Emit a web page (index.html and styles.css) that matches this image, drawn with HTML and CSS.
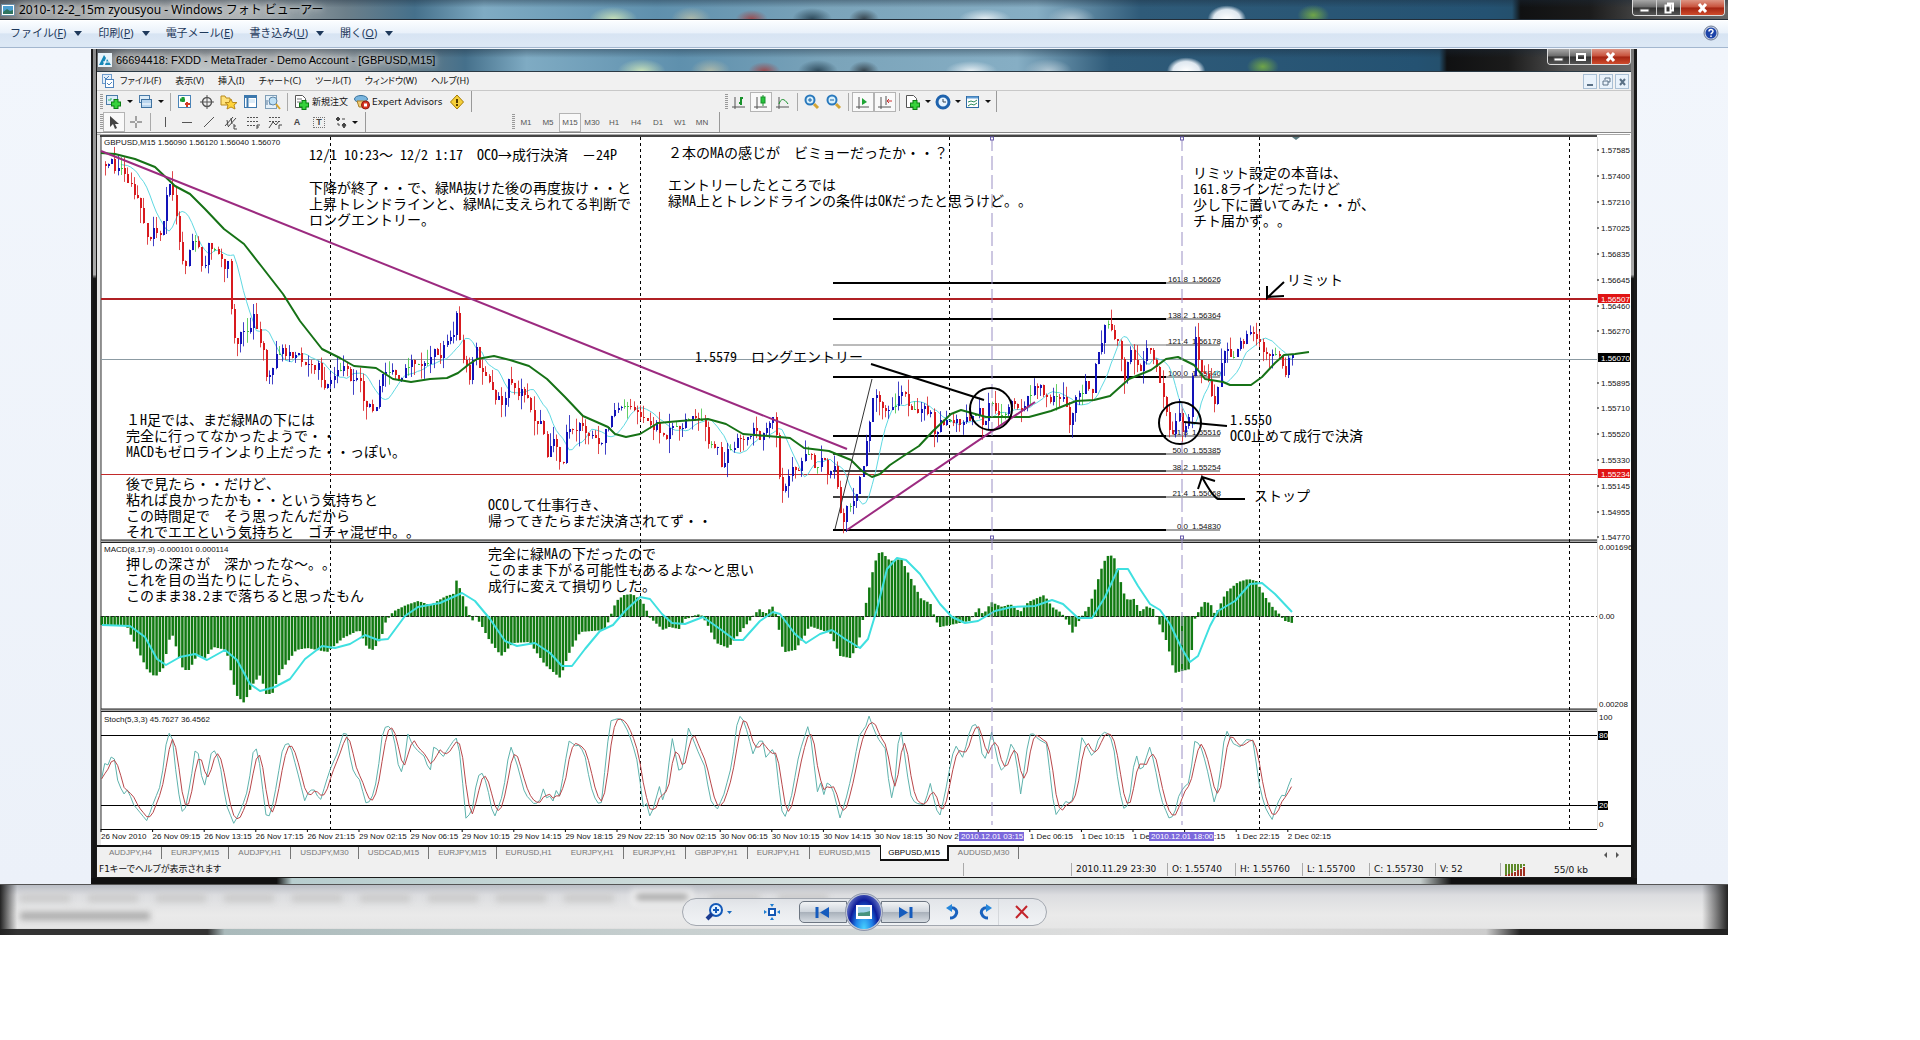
FILE: index.html
```html
<!DOCTYPE html>
<html lang="ja">
<head>
<meta charset="utf-8">
<title>2010-12-2_15m zyousyou - Windows フォト ビューアー</title>
<link rel="stylesheet" href="styles.css">
</head>
<body>
<div class="viewer">
  <header class="glass title">
    <svg class="title-icon" width="14" height="12" viewBox="0 0 14 12"><rect x="0.5" y="0.5" width="13" height="11" fill="#fff" stroke="#6d8ea6"/><rect x="2" y="2" width="10" height="8" fill="#4d9fd0"/><path d="M2 10V8l4-3 3 2 3-1v4z" fill="#2f7560"/></svg>
    <h1 class="title-text">2010-12-2_15m zyousyou - Windows フォト ビューアー</h1>
    <div class="caps">
      <button class="cap" aria-label="最小化"><svg width="12" height="10"><rect x="1" y="6" width="9" height="3" fill="#fff" stroke="#555"/></svg></button>
      <button class="cap" aria-label="元に戻す"><svg width="12" height="12"><path d="M4 1.500h6v7H8M2.500 3.500h5v7h-5z" fill="none" stroke="#fff" stroke-width="2"/></svg></button>
      <button class="cap cap-close" aria-label="閉じる"><svg width="12" height="10"><path d="M2 1l7 8M9 1L2 9" stroke="#fff" stroke-width="3"/></svg></button>
    </div>
  </header>
  <nav class="viewer-menu">
    <button>ファイル(<u>F</u>)<i class="tri"></i></button>
    <button>印刷(<u>P</u>)<i class="tri"></i></button>
    <button>電子メール(<u>E</u>)</button>
    <button>書き込み(<u>U</u>)<i class="tri"></i></button>
    <button>開く(<u>O</u>)<i class="tri"></i></button>
    <button class="help" aria-label="ヘルプ"><svg width="16" height="16" viewBox="0 0 16 16"><circle cx="8" cy="8" r="7" fill="#c9d2e4" stroke="#6d7b95"/><circle cx="8" cy="8" r="5.500" fill="#1c43a8"/><path d="M6 6.500C6 4 10 4 10 6.300 10 7.800 8 7.800 8 9.300M8 10.500v1.500" fill="none" stroke="#fff" stroke-width="1.500"/></svg></button>
  </nav>
  <main class="stage">
    <section class="mt">
      <header class="glass mt-title">
        <svg class="title-icon" width="14" height="14" viewBox="0 0 14 14"><rect width="14" height="14" fill="#e8f3fa"/><path d="M1 12L6 2l2 3-3 7zM7 12l2-6 4 6z" fill="#1688b8"/><path d="M5 9h6" stroke="#fff"/></svg>
        <h2 class="title-text mt-title-text">66694418: FXDD - MetaTrader - Demo Account - [GBPUSD,M15]</h2>
        <div class="caps caps-inner">
          <button class="cap" aria-label="最小化"><svg width="12" height="10"><rect x="1" y="6" width="9" height="3" fill="#fff" stroke="#555"/></svg></button>
          <button class="cap" aria-label="最大化"><svg width="12" height="10"><rect x="2" y="2" width="8" height="6" fill="none" stroke="#fff" stroke-width="2"/></svg></button>
          <button class="cap cap-close" aria-label="閉じる"><svg width="12" height="10"><path d="M2 1l7 8M9 1L2 9" stroke="#fff" stroke-width="3"/></svg></button>
        </div>
      </header>
      <nav class="mt-menu">
        <svg width="12" height="14" viewBox="0 0 12 14"><rect x="0.500" y="0.500" width="9" height="9" fill="#e4effa" stroke="#6f9ccc"/><rect x="3.500" y="5.500" width="8" height="8" fill="#fff" stroke="#4f84bd"/><path d="M2 3l2 2 3-3M5 9l2 2 3-3" fill="none" stroke="#4f84bd"/></svg>
        <button>ファイル(F)</button><button>表示(V)</button><button>挿入(I)</button><button>チャート(C)</button><button>ツール(T)</button><button>ウィンドウ(W)</button><button>ヘルプ(H)</button>
        <div class="mdi">
          <button aria-label="最小化"><svg width="11" height="11"><path d="M2 9h6" stroke="#5b7186" stroke-width="2"/></svg></button>
          <button aria-label="元に戻す"><svg width="11" height="11"><path d="M4 4V2h5v4H7M2 5h5v4H2z" fill="none" stroke="#5b7186"/></svg></button>
          <button aria-label="閉じる"><svg width="11" height="11"><path d="M3 3l5 6M8 3L3 9" stroke="#5b7186" stroke-width="2"/></svg></button>
        </div>
      </nav>
      <div class="bars">
        <div class="bar">
          <div class="group" id="standard">
            <i class="grip"></i>
            <button class="tool drop" aria-label="新規チャート"><svg width="18" height="16"><rect x="1.500" y="1.500" width="11" height="9" fill="#dcecf8" stroke="#4a7ba8"/><path d="M3 6h3v-2" fill="none" stroke="#3b6"/><path d="M11 5v10M6 10h10" stroke="#0a7d12" stroke-width="5"/><path d="M11 6v8M7 10h8" stroke="#37d23c" stroke-width="3"/></svg><i class="tri"></i></button>
            <button class="tool drop" aria-label="プロファイル"><svg width="16" height="16"><rect x="1.500" y="1.500" width="10" height="7" fill="#dcecf8" stroke="#4a7ba8"/><rect x="3.500" y="5.500" width="10" height="8" fill="#b9d5ee" stroke="#3f719f"/><path d="M4 10h9" stroke="#fff"/></svg><i class="tri"></i></button>
            <i class="rule"></i>
            <button class="tool" aria-label="気配値"><svg width="16" height="16"><rect x="1.500" y="1.500" width="12" height="12" fill="#fff" stroke="#4a84b8"/><path d="M6 3v5M3 6h5" stroke="#1c9b35" stroke-width="3"/><path d="M10 8v5M8 10h5" stroke="#d33b24" stroke-width="2"/></svg></button>
            <button class="tool" aria-label="データ"><svg width="16" height="16"><circle cx="8" cy="8" r="4.500" fill="none" stroke="#555" stroke-width="1.500"/><path d="M8 1v14M1 8h14" stroke="#555"/></svg></button>
            <button class="tool" aria-label="ナビゲーター"><svg width="18" height="16"><path d="M1 2h4l1 2h4v7H1z" fill="#ffe27a" stroke="#b98a1d"/><path d="M11 5l1.500 3.500H17l-3 2.500 1 4-4-2-4 2 1-4-3-2.500h4z" fill="#ffd43b" stroke="#b98a1d"/></svg></button>
            <button class="tool" aria-label="ターミナル"><svg width="16" height="16"><rect x="1.500" y="1.500" width="12" height="12" fill="#fff" stroke="#3c78ad"/><path d="M2 3h11M4.500 2v12" stroke="#3c78ad" stroke-width="2"/><path d="M6 5h6v4H6z" fill="#dcecf8"/></svg></button>
            <button class="tool" aria-label="テスター"><svg width="18" height="16"><rect x="1.500" y="1.500" width="11" height="13" fill="#e5f0f8" stroke="#7f9eb7"/><path d="M3 11V6m3 5V4" stroke="#579"/><circle cx="9" cy="7" r="4" fill="#bfe0f4" stroke="#5e86a8"/><path d="M12 10l4 5" stroke="#d9a72b" stroke-width="2"/></svg></button>
            <i class="rule"></i>
            <button class="tool label"><svg width="16" height="16"><path d="M1.500 1.500h7l3 3v9h-10z" fill="#fff" stroke="#555"/><path d="M3 5h5M3 8h4" stroke="#777"/><path d="M10 6v10M5 11h10" stroke="#0a7d12" stroke-width="5"/><path d="M10 7v8M6 11h8" stroke="#37d23c" stroke-width="3"/></svg>新規注文</button>
            <button class="tool label"><svg width="16" height="16"><ellipse cx="7" cy="5" rx="6.500" ry="3.500" fill="#7ab6df" stroke="#37719c"/><path d="M3 7h9l-1 6H5z" fill="#f0cb74" stroke="#a9812b"/><circle cx="11.500" cy="11" r="4" fill="#d93520" stroke="#8c1a0c"/><rect x="10" y="9.500" width="3" height="3" fill="#fff"/></svg>Expert Advisors</button>
            <button class="tool" aria-label="情報"><svg width="16" height="16"><path d="M8 1l6.500 7L8 15 1.500 8z" fill="#f5cf3a" stroke="#a67c00"/><path d="M8 5v4M8 10v2" stroke="#553c00" stroke-width="2"/></svg></button>
          </div>
          <div class="group chart-group">
            <i class="grip"></i>
            <button class="tool" aria-label="バーチャート"><svg width="16" height="16"><path d="M4 3v12M1 13h13" stroke="#555"/><path d="M10 3v8M8 9h2M10 4h2" stroke="#18912b" stroke-width="2"/></svg></button>
            <button class="tool on" aria-label="ローソク足"><svg width="16" height="16"><path d="M4 3v12M1 13h13" stroke="#555"/><path d="M10 1v11" stroke="#18912b"/><rect x="8" y="3" width="4" height="6" fill="#27c43d" stroke="#18912b"/></svg></button>
            <button class="tool" aria-label="ライン"><svg width="16" height="16"><path d="M4 3v12M1 13h13" stroke="#555"/><path d="M4 10c2-6 5-6 9 0" fill="none" stroke="#18912b"/></svg></button>
            <i class="rule"></i>
            <button class="tool" aria-label="拡大"><svg width="16" height="16"><circle cx="6" cy="6" r="4.500" fill="#d8f0fc" stroke="#2979bd" stroke-width="2"/><path d="M6 4v4M4 6h4" stroke="#1b64a6"/><path d="M10 10l4 4" stroke="#d3a535" stroke-width="3"/></svg></button>
            <button class="tool" aria-label="縮小"><svg width="16" height="16"><circle cx="6" cy="6" r="4.500" fill="#d8f0fc" stroke="#2979bd" stroke-width="2"/><path d="M4 6h4" stroke="#1b64a6"/><path d="M10 10l4 4" stroke="#d3a535" stroke-width="3"/></svg></button>
            <i class="rule"></i>
            <button class="tool on" aria-label="自動スクロール"><svg width="16" height="16"><path d="M4 3v12M1 13h13" stroke="#555"/><path d="M7 4l5 4-5 3z" fill="#1fa535"/></svg></button>
            <button class="tool on" aria-label="チャートシフト"><svg width="16" height="16"><path d="M4 3v12M1 13h13M9 2v9" stroke="#555"/><path d="M15 7h-5m2-2l-2 2 2 2" fill="none" stroke="#c33"/></svg></button>
            <i class="rule"></i>
            <button class="tool drop" aria-label="インディケータ"><svg width="16" height="16"><path d="M1.500 1.500h7l3 3v9h-10z" fill="#fff" stroke="#555"/><path d="M10 6v10M5 11h10" stroke="#0a7d12" stroke-width="5"/><path d="M10 7v8M6 11h8" stroke="#37d23c" stroke-width="3"/></svg><i class="tri"></i></button>
            <button class="tool drop" aria-label="時間軸"><svg width="16" height="16"><circle cx="8" cy="8" r="6" fill="#e9f5ff" stroke="#1f63ad" stroke-width="3"/><path d="M8 5v3h3" fill="none" stroke="#345"/></svg><i class="tri"></i></button>
            <button class="tool drop" aria-label="テンプレート"><svg width="16" height="16"><rect x="1.500" y="2.500" width="12" height="11" fill="#fff" stroke="#2f6aa3"/><path d="M2 3.500h11" stroke="#5d9bd3" stroke-width="2"/><path d="M3 8l3-1 3 1 3-2M3 12l3-2 3 1 3-2" fill="none" stroke="#2b8a5a"/></svg><i class="tri"></i></button>
          </div>
        </div>
        <div class="bar">
          <div class="group" id="draw">
            <i class="grip"></i>
            <button class="tool on" aria-label="カーソル"><svg width="14" height="16"><path d="M3 2v11l3-3 2 5 2-1-2-4h4z" fill="#444"/></svg></button>
            <button class="tool" aria-label="十字"><svg width="14" height="16"><path d="M7 2v5M7 9v5M1 8h5M8 8h5" stroke="#555"/></svg></button>
            <i class="rule"></i>
            <button class="tool" aria-label="垂直線"><svg width="14" height="16"><path d="M7.500 3v10" stroke="#555"/></svg></button>
            <button class="tool" aria-label="水平線"><svg width="14" height="16"><path d="M2 8.500h10" stroke="#555"/></svg></button>
            <button class="tool" aria-label="トレンドライン"><svg width="14" height="16"><path d="M2 13L12 3" stroke="#555"/></svg></button>
            <button class="tool" aria-label="チャネル"><svg width="14" height="16"><path d="M1 12L9 3M4 13l8-9M3 6l1 6M7 4l1 6M10 10v5h3M10 12h2" fill="none" stroke="#444"/></svg></button>
            <button class="tool" aria-label="フィボナッチ"><svg width="14" height="16"><path d="M1 3.500h12M1 7.500h12M1 11.500h8" stroke="#555" stroke-dasharray="2 1"/><path d="M11 15v-4h3M11 13h2" fill="none" stroke="#444"/></svg></button>
            <button class="tool" aria-label="ファン"><svg width="14" height="16"><path d="M1 3.500h12M1 7.500h12" stroke="#555" stroke-dasharray="2 1"/><path d="M1 14l4-6 3 3 3-4M11 15v-4h3" fill="none" stroke="#444"/></svg></button>
            <button class="tool glyph">A</button>
            <button class="tool glyph"><span class="boxed">T</span></button>
            <button class="tool drop" aria-label="矢印"><svg width="14" height="16"><path d="M4 3l2 2-2 2-2-2zM10 9l2 2-2 3-2-3z" fill="#444" stroke="#444"/><path d="M8 5h3M4 9v2h2" fill="none" stroke="#444"/></svg><i class="tri"></i></button>
          </div>
          <div class="group frames">
            <i class="grip"></i>
            <button class="tf">M1</button><button class="tf">M5</button><button class="tf on">M15</button><button class="tf">M30</button><button class="tf">H1</button><button class="tf">H4</button><button class="tf">D1</button><button class="tf">W1</button><button class="tf">MN</button>
          </div>
        </div>
      </div>
      <svg class="chart" id="chart" viewBox="97 134 1534 712" role="img" aria-label="GBPUSD,M15"></svg>
      <nav class="tabs">
        <a href="#chart">AUDJPY,H4</a><a href="#chart">EURJPY,M15</a><a href="#chart">AUDJPY,H1</a><a href="#chart">USDJPY,M30</a><a href="#chart">USDCAD,M15</a><a href="#chart">EURJPY,M15</a><a href="#chart" class="bare">EURUSD,H1</a><a href="#chart">EURJPY,H1</a><a href="#chart">EURJPY,H1</a><a href="#chart">GBPJPY,H1</a><a href="#chart">EURJPY,H1</a><a href="#chart" class="bare">EURUSD,M15</a><a href="#chart" class="current">GBPUSD,M15</a><a href="#chart">AUDUSD,M30</a>
        <span class="scrolls"><i class="left"></i><i class="right"></i></span>
      </nav>
      <footer class="status">
        <span class="hint">F1キーでヘルプが表示されます</span><span></span><span>2010.11.29 23:30</span><span>O: 1.55740</span><span>H: 1.55760</span><span>L: 1.55700</span><span>C: 1.55730</span><span>V: 52</span>
        <span class="traffic"><svg width="20" height="12" viewBox="0 0 20 12"><path d="M1 0v11M4 0v10M7 0v9M10 0v7M13 0v6M16 0v4M19 0v2" stroke="#5f8a2a" stroke-width="2"/><path d="M1 11v1M4 10v2M7 9v3M10 8v4M13 6v6M16 5v7M19 3v9" stroke="#a03020" stroke-width="2"/></svg>55/0 kb</span>
      </footer>
    </section>
  </main>
  <footer class="deck">
    <div class="haze" aria-hidden="true"><div class="haze-tabs"><i></i><i></i><i></i><i></i><i></i><i></i><i></i><i></i><i></i><b></b><i></i><i></i></div><div class="haze-line"></div></div>
    <div class="pill">
      <button aria-label="表示サイズの変更"><svg width="28" height="20" viewBox="0 0 28 20"><circle cx="12" cy="8" r="6" fill="#e5f3ff" stroke="#1459b8" stroke-width="2"/><path d="M12 5v6M9 8h6" stroke="#1459b8" stroke-width="2"/><path d="M8 12l-5 5" stroke="#1c3c90" stroke-width="4"/><path d="M23 9h5l-2.500 3z" fill="#1c6cc0"/></svg></button>
      <button class="fit" aria-label="実際のサイズ"><svg width="18" height="18" viewBox="0 0 18 18"><rect x="6" y="6" width="6" height="6" fill="#fff" stroke="#1558b4" stroke-width="2"/><path d="M7 1h4L9 4zM7 17h4l-2-3zM1 7v4l3-2zM17 7v4l-3-2z" fill="#1c7cd0"/></svg></button>
      <div class="nav">
        <button class="side prev" aria-label="前へ"><svg width="15" height="13"><path d="M2 1v11" stroke="#155bbd" stroke-width="3"/><path d="M14 1v11L5 6.500z" fill="#155bbd"/></svg></button>
        <button class="orb" aria-label="スライドショー"><svg width="18" height="16"><rect x="1" y="1" width="16" height="14" fill="#fff"/><rect x="3" y="3" width="12" height="9" fill="#9fd3ea"/><path d="M3 12V9c4-1 7 0 12-2v5z" fill="#47947d"/></svg></button>
        <button class="side next" aria-label="次へ"><svg width="15" height="13"><path d="M13 1v11" stroke="#155bbd" stroke-width="3"/><path d="M1 1v11l9-5.500z" fill="#155bbd"/></svg></button>
      </div>
      <button aria-label="左回転"><svg width="14" height="16"><path d="M5 4c5-1 8 3 6 6.500C10 13 8 14 5 14" fill="none" stroke="#1a62be" stroke-width="3"/><path d="M7 0v8L1 4z" fill="#2587dc"/></svg></button>
      <button aria-label="右回転"><svg width="14" height="16"><path d="M9 4C4 3 1 7 3 10.500 4 13 6 14 9 14" fill="none" stroke="#1a62be" stroke-width="3"/><path d="M7 0v8l6-4z" fill="#2587dc"/></svg></button>
      <button class="del" aria-label="削除"><svg width="16" height="16"><path d="M2 2l12 12M13 2L2 14" stroke="#c3242b" stroke-width="2"/></svg></button>
    </div>
  </footer>
</div>
<script src="chart.js"></script>
</body>
</html>
```
FILE: styles.css
```css
* { box-sizing: border-box; }
body { margin: 0; background: #fff; font-family: "Liberation Sans", "Noto Sans CJK JP", sans-serif; color: #111; }
button { font: inherit; color: inherit; background: none; border: 0; padding: 0; margin: 0; }
svg { display: block; }
u { text-underline-offset: 1px; }

.viewer { width: 90%; display: flex; flex-direction: column; overflow: hidden; }

.glass {
  display: flex; align-items: center;
  background:
    radial-gradient(ellipse 40px 18px at 7% 100%, #c9d1d4cc, transparent),
    radial-gradient(ellipse 24px 12px at 35.5% 100%, #c5dfb8, transparent),
    radial-gradient(ellipse 20px 12px at 40% 100%, #d0cba8aa, transparent),
    radial-gradient(ellipse 16px 9px at 43.500% 100%, #9a4c50, transparent),
    radial-gradient(ellipse 20px 11px at 47% 100%, #2f4b5c, transparent),
    radial-gradient(ellipse 15px 10px at 50% 100%, #37454e, transparent),
    radial-gradient(ellipse 26px 10px at 57% 100%, #e4edf2, transparent),
    radial-gradient(ellipse 24px 12px at 62% 100%, #b3c8d4, transparent),
    radial-gradient(ellipse 24px 17px at 71% 100%, #fff, #dfe8f0 55%, transparent 80%),
    radial-gradient(ellipse 20px 13px at 76% 80%, #6fa548, transparent 80%),
    linear-gradient(#1b2a3a66, transparent 40%),
    linear-gradient(90deg, #6d6f72, #9c9fa0 2%, #aeb2b4 14%, #6c7f8a 20%, #45708b 24%, #7fabc3 28%, #5f90ad 38%, #7ba4ba 48%, #86aec4 60%, #2f5b79 66%, #245272 86%, #24506d 87.500%, #101112 88%, #1b1b1b 92%, #555 96%, #666);
}
.title { height: 20px; border-bottom: 1px solid #222d38; }
.title-icon { margin-left: 1px; flex: none; }
.title-text { margin: 0 0 0 4px; font: 400 12px/18px "Noto Sans", "Noto Sans CJK JP", sans-serif; color: #000; white-space: nowrap; text-shadow: 0 0 5px #ddd, 0 0 8px #ddd; }
.mt-title-text { font: 400 11px/18px "Liberation Sans", sans-serif; }
.caps { margin-left: auto; margin-right: 3px; align-self: flex-start; display: flex; height: 16px; border: 1px solid #ddd; border-top: 0; border-radius: 0 0 4px 4px; overflow: hidden; }
.caps-inner { margin-right: 0; }
.cap { width: 24px; display: grid; place-items: center; background: linear-gradient(#a8a8a8, #6a6a6a 48%, #2e2e2e 52%, #555); border-right: 1px solid #ccc; }
.cap-close { width: 43px; border-right: 0; background: linear-gradient(#dd9483, #c7503a 48%, #a32311 52%, #cf4c2c); }
.caps-inner .cap { width: 22px; }
.caps-inner .cap-close { width: 38px; }

.viewer-menu { display: flex; align-items: center; height: 28px; padding: 0 9px 2px 10px; font: 11px/16px "Noto Sans", "Noto Sans CJK JP", sans-serif; color: #1e395b; background: linear-gradient(#fbfdff, #e9f1fa 45%, #d7e4f3 50%, #dce8f5 90%); border-bottom: 1px solid #a3b7cf; border-top: 1px solid #fff; }
.viewer-menu button { display: flex; align-items: center; margin-right: 16px; white-space: pre; }
.viewer-menu .tri { margin-left: 8px; border-width: 5px 4px 0; }
.viewer-menu .help { margin: 0 0 0 auto; }
.tri { display: inline-block; width: 0; height: 0; border: solid transparent; border-width: 3px 3px 0; border-top-color: currentColor; }

.stage { background: linear-gradient(#f2f6fc, #ecf1f9); padding: 1px 91px 0; }
.mt { display: flex; flex-direction: column; padding: 0 6px 7px; background:
  linear-gradient(90deg, #111 12%, #b7cdce 13%, #dfe7e4 60%, #c4cccb 86%, #111 88%) bottom / 100% 6px no-repeat,
  linear-gradient(#8b8b8b, #aaa 27%, #151515 27.500%) 2px 0 / 3px 100% no-repeat,
  linear-gradient(#777, #aaa 27%, #151515 27.500%) right 3px top 0 / 3px 100% no-repeat, #1a1a1a; }
.mt-title { height: 23px; border-bottom: 1px solid #2b3a45; }
.mt-menu { display: flex; align-items: center; height: 19px; padding: 0 2px 0 5px; background: #f1f1f1; border-bottom: 1px solid #c8c8c8; font: 9px/14px "Noto Sans", "Noto Sans CJK JP", sans-serif; font-feature-settings: "palt"; }
.mt-menu > button { margin-right: 14px; white-space: nowrap; }
.mt-menu > svg { margin-right: 6px; }
.mdi { margin-left: auto; display: flex; gap: 2px; }
.mdi button { width: 14px; height: 15px; display: grid; place-items: center; background: #e9f2fb; border: 1px solid #a9bfd4; }

.bars { background: #f0f0f0; border-bottom: 1px solid #888; }
.bar { display: flex; height: 21px; }
.bar + .bar { height: 20px; }
.group { display: flex; align-items: center; padding: 0 3px; border-right: 1px solid #999; }
.grip { width: 3px; height: 16px; background: repeating-linear-gradient(#999 0 1px, #f0f0f0 1px 2px); }
.rule { width: 1px; height: 18px; background: #aaa; margin: 0 3px; }
.tool { width: 22px; height: 20px; display: flex; align-items: center; justify-content: center; font-size: 9px; white-space: nowrap; }
.tool.drop { width: 32px; gap: 4px; }
.tool.label { width: auto; gap: 2px; padding: 0 3px; font-family: "DejaVu Sans", "Noto Sans CJK JP", sans-serif; font-size: 9px; }
.on { border: 1px solid #b4b4b4; background: #f9f9f9; }
.glyph { font-weight: 700; color: #444; }
.boxed { border: 1px dotted #777; padding: 0 2px; line-height: 9px; }
.chart-group { margin-left: 250px; }
.frames { margin-left: 143px; padding-right: 6px; color: #555; font-size: 8px; }
.tf { width: 22px; height: 19px; text-align: center; }
.chart-group .drop { width: 30px; }

.chart { width: 100%; height: auto; background: #fff; }
.chart text { font: 8px "Liberation Sans", sans-serif; fill: #111; }
.chart text.note { font: 14px "Noto Sans Mono CJK JP", "Noto Sans CJK JP", monospace; text-spacing-trim: space-all; fill: #000; }
.chart text.inv { fill: #fff; }

.tabs { display: flex; height: 17px; padding: 0 9px 0 3px; background: #f0f0f0; font-size: 8px; border-top: 2px solid #111; }
.tabs a { color: #777; text-decoration: none; padding: 0 9px; height: 12px; line-height: 12px; border-right: 1px solid #777; white-space: nowrap; }
.tabs .bare { border-right-color: transparent; }
.tabs .current { color: #000; background: #fff; border: solid #111; border-width: 0 2px 2px 1px; margin-top: -2px; height: 16px; line-height: 16px; padding: 0 7px; }
.scrolls { margin-left: auto; display: flex; gap: 9px; align-items: center; }
.scrolls i { border: solid transparent; border-width: 3px; width: 0; }
.scrolls .left { border-right-color: #555; }
.scrolls .right { border-left-color: #555; }
.status { display: grid; grid-template-columns: 1fr 108px 96px 68px 67px 67px 66px 65px 131px; align-items: center; height: 15px; background: #f0f0f0; font: 9px/12px "DejaVu Sans", "Noto Sans CJK JP", sans-serif; }
.status span { height: 13px; padding-left: 4px; border-left: 1px solid #aaa; white-space: nowrap; overflow: hidden; }
.status .hint { border: 0; padding-left: 2px; font-feature-settings: "palt"; font-size: 9px; }
.status .traffic { display: flex; gap: 29px; align-items: center; }

.deck { position: relative; display: flex; justify-content: center; align-items: center; height: 51px; padding-top: 4px; border-top: 1px solid #555; overflow: hidden; background:
  linear-gradient(90deg, #222, transparent 1%, transparent 98.500%, #222),
  linear-gradient(90deg, #333 12%, #aababb 13%, #c8d0d0 40%, #dedede 65%, #ccc 86%, #222 88%) bottom / 100% 6px no-repeat,
  linear-gradient(#b9bdc4, #dcdde0 20%, #eaeaea 60%, #e6e6e6 85%, #b8b8b8); }
.haze { position: absolute; inset: 9px 20px 6px; filter: blur(3px); }
.haze-tabs { display: flex; gap: 18px; }
.haze-tabs i { width: 50px; height: 8px; background: #cacaca; }
.haze-tabs b { width: 60px; height: 14px; margin-top: -4px; background: #999; border: 4px solid #f8f8f8; }
.haze-line { width: 130px; height: 8px; margin-top: 8px; background: #aaa; }
.pill { position: relative; display: grid; grid-template-columns: 70px 46px 131px 44px 24px 48px; height: 28px; border: 1px solid #a3a8b0; border-radius: 14px; background: linear-gradient(#e3e6ebcc, #f2f5f8cc); }
.pill button { display: grid; place-items: center; }
.pill .fit { padding-right: 8px; }
.pill .del { border-left: 1px solid #d5d8dc; }
.nav { display: flex; align-items: center; justify-content: center; }
.nav .side { flex: 1; height: 22px; border: 1px solid #6d7682; background: linear-gradient(#f1f3f5, #cfd5dc 48%, #a9b1bb 52%, #d5dbe1); }
.nav .prev { border-radius: 5px 0 0 5px; }
.nav .next { border-radius: 0 5px 5px 0; }
.nav .orb { width: 38px; height: 38px; margin: -7px -2px; z-index: 1; flex: none; border-radius: 50%; border: 2px solid #c2c9d8; outline: 1px solid #8f97ab; outline-offset: -1px; background: radial-gradient(ellipse at 50% 100%, #49d4ff, #1f7fe6 35%, #0c1c9a 60%, #5a69c0 80%, #b8c0e6); }
```
FILE: chart.js
```js
const NS = 'http://www.w3.org/2000/svg';
const chart = document.getElementById('chart');
const STEP = 3.225, LEFT = 102.5, BARS = 370;

function add(tag, attrs, text) {
  const el = document.createElementNS(NS, tag);
  for (const key in attrs) el.setAttribute(key, attrs[key]);
  if (text !== undefined) el.textContent = text;
  chart.appendChild(el);
  return el;
}
const line = (x1, y1, x2, y2, stroke, width = 1, extra = {}) =>
  add('line', { x1, y1, x2, y2, stroke, 'stroke-width': width, ...extra });
const path = (points, stroke, width) =>
  add('polyline', { points: points.map(p => p.join(',')).join(' '), fill: 'none', stroke, 'stroke-width': width, 'stroke-linejoin': 'round' });
const parse = s => s.trim().split(/\s+/).map(p => p.split(',').map(Number));
function sample(points, x) {
  if (x <= points[0][0]) return points[0][1];
  for (let i = 1; i < points.length; i++) {
    const [x0, y0] = points[i - 1], [x1, y1] = points[i];
    if (x <= x1) return y0 + (y1 - y0) * (x - x0) / (x1 - x0);
  }
  return points[points.length - 1][1];
}
const xs = Array.from({ length: BARS }, (_, i) => LEFT + i * STEP - 1);
const noise = n => { const v = Math.sin(n * 127.1 + 11.7) * 43758.5453; return v - Math.floor(v); };

const price = parse(`102,163 106,166 110,162 115,168 118,172 122,168 126,176 130,186 134,193 138,198 142,215 146,233
150,238 153,230 158,240 162,228 166,200 169,185 173,195 176,222 180,245 183,273 188,255 193,235 197,240 200,268 204,270 208,242
214,253 220,258 224,270 227,258 229,300 232,325 235,350 238,342 242,332 248,338 254,315 258,335 263,350 267,384 271,372
277,355 283,352 290,356 298,358 303,365 310,370 318,368 322,392 330,382 338,372 346,368 352,385 358,372 364,415 370,400
374,418 378,390 382,375 386,370 392,370 400,382 405,365 412,362 420,370 428,365 434,345 440,360 446,342 452,338 456,315
460,345 464,362 470,380 475,348 480,370 487,375 493,398 500,402 503,410 508,382 516,392 524,395 530,405 535,432 541,420
547,464 552,440 557,455 562,468 566,435 574,430 580,425 588,435 600,445 606,430 611,418 618,408 626,408 636,410
643,418 650,430 658,426 664,443 672,422 678,432 686,418 694,420 700,418 706,435 710,450 716,445 721,465 727,455 732,450
738,440 748,435 755,430 760,445 765,432 770,418 774,425 777,440 780,497 786,487 792,465 798,472 806,455 810,448 814,470
822,460 828,475 834,470 838,495 842,528 845,505 852,508 857,490 863,462 868,430 870,408 874,398 880,405 888,412 893,412
898,395 902,390 906,405 912,412 920,408 930,415 934,437 940,425 948,422 960,425 970,420 978,410 984,432 990,400 995,410
1000,415 1006,412 1012,402 1018,412 1022,415 1026,398 1032,392 1040,386 1048,400 1056,400 1064,400 1070,427 1074,405
1080,395 1086,385 1092,392 1096,355 1102,338 1107,320 1112,335 1118,345 1124,378 1130,350 1136,365 1141,375 1146,345
1150,355 1156,368 1162,395 1168,425 1173,435 1178,412 1182,436 1188,425 1192,370 1195,338 1198,365 1203,375 1207,385
1214,402 1217,385 1224,352 1227,350 1233,363 1239,338 1242,345 1249,333 1255,342 1264,350 1271,358 1276,350 1285,372 1289,358 1293,360`);
const slow = parse(`101,154 115,155 135,160 155,168 175,187 190,195 205,210 224,230 244,245 262,268 283,295 300,322 322,350
340,359 354,367 376,369 393,380 411,383 430,380 447,379 458,374 468,366 477,360 494,357 510,361 529,367 547,380 565,398 583,417 608,428 615,435
626,438 640,435 658,424 680,422 708,420 726,425 743,435 790,439 804,449 829,452 851,461 862,472 872,478 880,475 890,466 905,456 919,447 933,432 951,415 961,411
986,418 1029,418 1051,412 1076,402 1094,401 1110,397 1129,380 1151,371 1166,360 1178,358 1194,366 1205,380 1223,383
1230,386 1251,386 1262,378 1275,364 1284,356 1295,355 1309,353`);
const macd = parse(`102,625 126,625 133,640 147,670 155,677 163,668 169,640 173,635 177,652 183,670 189,670 197,655 205,658 213,647
226,650 236,695 244,703 252,685 260,675 266,694 272,694 280,672 296,650 307,648 327,652 343,638 359,630 367,648 373,650
381,638 385,623 389,617 394,612 406,606 418,602 430,606 446,597 453,595 456,581 462,595 468,614 472,621 475,616 481,625
489,640 501,656 513,643 529,642 545,665 560,678 568,655 580,632 604,630 609,620 616,602 624,596 632,595 642,602 649,617
663,630 669,627 679,629 685,619 700,615 706,622 716,643 728,648 740,632 751,619 759,610 765,615 772,607 777,618 781,645
785,652 795,650 805,635 809,626 830,633 840,656 850,658 858,645 862,623 866,603 874,565 880,551 886,558 890,562 901,560
910,578 921,600 930,604 935,620 940,627 969,621 979,609 983,616 991,603 1002,608 1010,605 1020,613 1028,603 1044,596
1052,608 1060,613 1068,622 1072,633 1078,622 1089,607 1095,590 1103,564 1109,555 1115,560 1123,593 1128,602 1133,599
1141,614 1145,607 1153,610 1157,619 1167,643 1174,673 1190,669 1194,620 1204,603 1210,604 1215,616 1226,593 1238,583
1248,580 1256,582 1265,598 1273,609 1285,621 1292,623`);
const signal = parse(`102,626 130,627 145,638 157,660 166,666 180,658 195,655 207,661 225,651 237,661 250,685 260,692 275,688 290,680
305,660 322,647 335,649 350,645 365,636 378,641 388,640 405,617 418,608 440,604 462,594 475,602 490,620 505,642 517,647
535,644 550,654 562,667 572,667 585,650 600,632 613,626 625,612 640,598 650,600 662,615 672,624 685,625 703,618 720,630
735,641 743,641 760,622 773,613 780,615 795,635 806,644 820,635 832,631 845,640 860,649 868,640 877,610 887,570 897,559
906,561 920,575 940,605 952,618 965,624 978,622 995,612 1012,608 1035,607 1052,601 1063,605 1078,619 1092,619 1105,598
1118,570 1128,570 1138,587 1150,605 1160,611 1170,625 1182,650 1190,663 1198,657 1210,627 1218,612 1235,602 1250,585
1262,584 1275,595 1292,613`);
const stoch = parse(`102,780 105,763 108,766 112,756 115,761 118,784 124,795 128,790 133,805 147,822 153,805 161,785 167,738 170,733
173,742 177,785 183,817 186,807 191,780 195,752 199,755 201,775 205,787 212,750 216,753 220,765 226,805 234,825 242,808
248,790 254,747 258,752 262,785 266,816 270,817 274,800 282,753 286,744 290,745 298,775 305,803 309,791 315,791 320,803
327,780 331,768 337,755 343,735 346,731 350,758 354,775 359,779 366,804 371,802 377,780 383,730 387,727 391,728 395,745
400,777 404,765 408,734 412,745 418,752 424,757 430,774 434,746 443,758 448,750 456,738 460,755 466,820 472,812 477,780
481,772 487,785 491,808 495,817 503,795 508,760 511,748 517,765 525,795 535,806 540,801 543,789 547,800 551,796 553,802
557,789 560,799 564,770 569,742 576,747 580,746 586,760 590,785 596,802 601,807 605,770 610,722 620,719 626,728 632,743
638,765 643,808 647,804 650,818 655,805 659,785 662,803 666,790 672,738 676,758 680,777 684,762 688,728 693,740 699,755
705,768 710,800 717,811 724,795 732,765 737,725 741,715 747,732 753,755 757,745 762,739 766,759 772,750 776,758 781,810
785,818 791,800 799,755 808,727 812,745 817,794 821,783 824,796 827,784 832,787 840,819 846,800 852,775 859,737 866,727
869,717 874,731 880,743 885,748 889,785 893,806 898,745 901,731 906,765 910,795 915,804 925,806 930,783 936,810 940,816
945,795 952,757 956,747 963,759 969,735 973,725 978,726 983,762 987,757 992,731 997,760 1002,773 1006,765 1012,741
1016,758 1021,798 1026,755 1031,732 1038,740 1047,745 1052,795 1057,820 1061,804 1063,808 1067,800 1071,808 1076,780
1082,738 1087,748 1093,759 1099,738 1106,732 1113,743 1119,790 1124,810 1129,805 1133,770 1137,756 1141,775 1150,747
1155,768 1161,800 1169,819 1174,817 1179,796 1184,788 1190,783 1194,742 1200,745 1206,765 1215,807 1220,775 1225,733
1228,732 1232,744 1240,748 1247,740 1253,742 1260,790 1265,808 1272,821 1277,805 1282,796 1284,800 1291,779`);

/* pane frames and separators */
add('rect', { x: 97, y: 134, width: 4, height: 712, fill: '#e6e6e6' });
line(97, 135.5, 1630, 135.5, '#aaa');
line(100, 137, 1597, 137, '#444', 2);
line(101, 137, 101, 831, '#333');
[541, 710].forEach(y => {
  add('rect', { x: 101, y, width: 1496, height: 2, fill: '#aaa' });
  line(101, y, 1597, y, '#222');
  line(101, y + 2.5, 1597, y + 2.5, '#222');
});
line(101, 830.5, 1597, 830.5, '#000');
line(1597.5, 138, 1597.5, 830, '#ddd');
[330.5, 640.5, 949.5, 1259.5, 1569.5].forEach(x => line(x, 138, x, 830, '#000', 1, { 'stroke-dasharray': '3 3' }));

/* price levels */
line(101, 360.5, 1597, 360.5, '#8c9ba3');
line(101, 300, 1597, 300, '#b02024', 2);
line(101, 475.5, 1597, 475.5, '#c22a2a');
const fib = [[284, '161.8', '1.56626'], [320, '138.2', '1.56364'], [346, '121.4', '1.56178'], [378, '100.0', '1.55940'],
  [437, '61.8', '1.55516'], [455, '50.0', '1.55385'], [472, '38.2', '1.55254'], [498, '21.4', '1.55068'], [531, '0.0', '1.54830']];
fib.forEach(([y, pct, value]) => {
  const thin = y > 450 && y < 500;
  line(833, y, 1166, y, y === 346 ? '#777' : '#000', y === 346 ? 1 : thin ? 1.5 : 2);
  line(1166, y, 1220, y, '#444');
  add('text', { x: 1188, y: y - 1, 'text-anchor': 'end' }, pct);
  add('text', { x: 1192, y: y - 1 }, value);
});

/* candles */
const close = xs.map((x, i) => sample(price, x) + (noise(i) - 0.5) * 9);
const fast = xs.map((x, i) => {
  const from = Math.max(0, i - 8), part = close.slice(from, Math.max(1, i - 1));
  return [x, part.reduce((a, b) => a + b, 0) / part.length];
});
path(fast.slice(6), '#5fd9e2', 1);
for (let i = 1; i < BARS; i++) {
  const open = close[i - 1], end = close[i], x = Math.round(xs[i]);
  const move = Math.abs(end - open);
  const colour = move < 0.8 ? '#3fc43f' : end < open ? '#1212b8' : '#d81a1e';
  const top = Math.min(open, end), low = Math.max(open, end);
  const up = noise(i + 500) ** 2 * 15, down = noise(i + 900) ** 2 * 15;
  add('rect', { x, y: top - up, width: 1, height: low - top + up + down, fill: colour, opacity: 0.8 });
  add('rect', { x, y: top, width: 2, height: Math.max(1, low - top), fill: colour, 'shape-rendering': 'crispEdges' });
}
path(slow, '#167216', 2);
line(101, 152, 847, 450, '#9c2b80', 2);
line(847, 531, 1035, 403, '#9c2b80', 2);
line(835, 530, 872, 380, '#333');

/* MACD */
for (const x of xs) {
  const y = sample(macd, x), top = Math.min(y, 617);
  add('rect', { x: x - 1, y: top, width: 2.5, height: Math.abs(y - 617) + 1, fill: '#127a12' });
}
line(101, 617.5, 1597, 617.5, '#222', 1, { 'stroke-dasharray': '3 2' });
path(signal, '#3fe0e0', 2);

/* stochastic */
line(101, 736.5, 1597, 736.5, '#000', 1);
line(101, 806.5, 1597, 806.5, '#000', 1);
const k = xs.map(x => sample(stoch, x));
path(xs.map((x, i) => [x, k[i]]), '#5fb3ad', 1);
path(xs.map((x, i) => [x, (k[i] + k[Math.max(0, i - 1)] + k[Math.max(0, i - 2)]) / 3]), '#b8474a', 1);

/* session markers */
[992, 1182].forEach(x => {
  line(x, 138, x, 826, '#9a8fc4', 1, { 'stroke-dasharray': '14 5' });
  [138, 537].forEach(y => add('rect', { x: x - 1.5, y, width: 3, height: 3, fill: '#fff', stroke: '#6a5cab' }));
});
add('path', { d: 'M1292 138h8l-4 3z', fill: '#5a7a80' });

/* hand-drawn marks */
const ink = { fill: 'none', stroke: '#000', 'stroke-width': 2 };
add('ellipse', { cx: 991, cy: 410, rx: 21, ry: 21, ...ink });
add('ellipse', { cx: 1180, cy: 424, rx: 21, ry: 21, ...ink });
add('path', { d: 'M871 365L984 401M1184 423l43 4M1284 283l-17 16v-12M1267 298l17-1M1245 500h-27q-5-2-16-22l-4 12M1202 478l13 4', ...ink });

/* axes */
const prices = [[151, '1.57585'], [177, '1.57400'], [203, '1.57210'], [229, '1.57025'], [255, '1.56835'], [281, '1.56645'],
  [307, '1.56460'], [332, '1.56270'], [384, '1.55895'], [409, '1.55710'], [435, '1.55520'], [461, '1.55330'], [487, '1.55145'],
  [513, '1.54955'], [538, '1.54770']];
prices.forEach(([y, t]) => { line(1597, y, 1599, y, '#000'); add('text', { x: 1601, y: y + 3 }, t); });
[[300, '1.56507', '#e01414'], [475, '1.55234', '#e01414'], [359, '1.56070', '#000']].forEach(([y, t, fill]) => {
  add('rect', { x: 1598, y: y - 5, width: 32, height: 9, fill });
  add('text', { x: 1601, y: y + 3, class: 'inv' }, t);
});
[[548, '0.001696'], [617, '0.00'], [705, '0.00208'], [718, '100'], [825, '0']].forEach(([y, t]) => add('text', { x: 1599, y: y + 3 }, t));
[[736, '80'], [806, '20']].forEach(([y, t]) => {
  add('rect', { x: 1598, y: y - 4, width: 10, height: 9, fill: '#000' });
  add('text', { x: 1599, y: y + 3, class: 'inv' }, t);
});
['26 Nov 2010', '26 Nov 09:15', '26 Nov 13:15', '26 Nov 17:15', '26 Nov 21:15', '29 Nov 02:15', '29 Nov 06:15', '29 Nov 10:15',
  '29 Nov 14:15', '29 Nov 18:15', '29 Nov 22:15', '30 Nov 02:15', '30 Nov 06:15', '30 Nov 10:15', '30 Nov 14:15', '30 Nov 18:15',
  '30 Nov 22:15', '', '1 Dec 06:15', '1 Dec 10:15', '1 Dec 14:15', '', '1 Dec 22:15', '2 Dec 02:15'].forEach((t, i) => {
  const x = 101 + i * 51.6;
  line(x, 830, x, 833, '#000');
  if (t === '30 Nov 22:15') t = '30 Nov 2';
  if (t === '1 Dec 14:15') t = '1 De';
  if (t) add('text', { x, y: 840 }, t);
});
add('text', { x: 1214, y: 840 }, ':15');
[[959, '2010.12.01 03:15'], [1149, '2010.12.01 18:00']].forEach(([x, t]) => {
  add('rect', { x, y: 833, width: 65, height: 9, fill: '#7b68dc' });
  add('text', { x: x + 2, y: 840, class: 'inv' }, t);
});
add('text', { x: 104, y: 146 }, 'GBPUSD,M15 1.56090 1.56120 1.56040 1.56070');
add('text', { x: 104, y: 553 }, 'MACD(8,17,9) -0.000101 0.000114');
add('text', { x: 104, y: 723 }, 'Stoch(5,3,3) 45.7627 36.4562');

/* trade notes */
[[309, 161, '12/1 10:23～ 12/2 1:17　OCO→成行決済　－24P'],
 [309, 194, '下降が終了・・で、緑MA抜けた後の再度抜け・・と'],
 [309, 210, '上昇トレンドラインと、緑MAに支えられてる判断で'],
 [309, 226, 'ロングエントリー。'],
 [668, 159, '２本のMAの感じが　ビミョーだったか・・？'],
 [668, 191, 'エントリーしたところでは'],
 [668, 207, '緑MA上とトレンドラインの条件はOKだったと思うけど。。'],
 [1193, 179, 'リミット設定の本音は、'],
 [1193, 195, '161.8ラインだったけど'],
 [1193, 211, '少し下に置いてみた・・が、'],
 [1193, 227, 'チト届かず。。'],
 [1287, 286, 'リミット'],
 [695, 363, '1.5579　ロングエントリー'],
 [1230, 426, '1.5550'],
 [1230, 442, 'OCO止めて成行で決済'],
 [1254, 502, 'ストップ'],
 [126, 426, '１H足では、まだ緑MAの下には'],
 [126, 442, '完全に行ってなかったようで・・'],
 [126, 458, 'MACDもゼロラインより上だった・・っぽい。'],
 [126, 490, '後で見たら・・だけど、'],
 [126, 506, '粘れば良かったかも・・という気持ちと'],
 [126, 522, 'この時間足で　そう思ったんだから'],
 [126, 538, 'それでエエという気持ちと　ゴチャ混ぜ中。。'],
 [488, 511, 'OCOして仕事行き、'],
 [488, 527, '帰ってきたらまだ決済されてず・・'],
 [488, 560, '完全に緑MAの下だったので'],
 [488, 576, 'このまま下がる可能性もあるよな～と思い'],
 [488, 592, '成行に変えて損切りした。'],
 [126, 570, '押しの深さが　深かったな～。。'],
 [126, 586, 'これを目の当たりにしたら、'],
 [126, 602, 'このまま38.2まで落ちると思ったもん']
].forEach(([x, y, t]) => add('text', { x, y, class: 'note' }, t));
```
